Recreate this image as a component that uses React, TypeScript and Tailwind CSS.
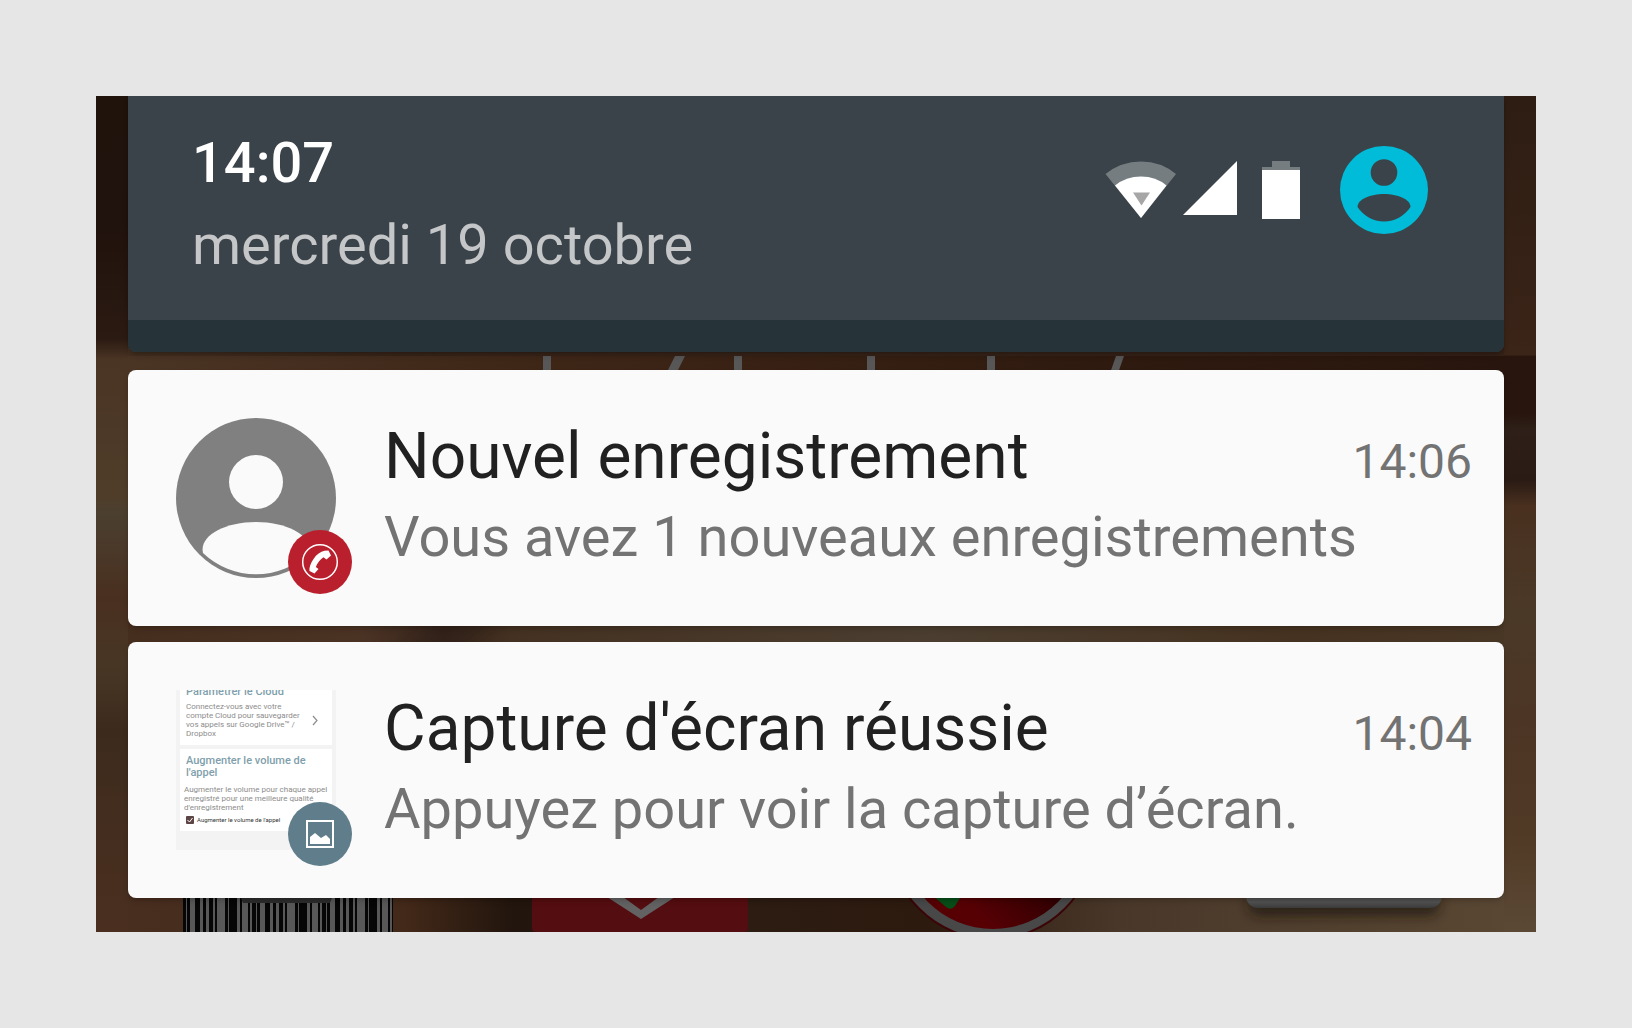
import type { ReactNode } from "react";

function Wallpaper() {
  return (
    <svg
      className="absolute inset-0 size-full"
      viewBox="96 96 1440 836"
      preserveAspectRatio="xMidYMid slice"
      aria-hidden="true"
    >
      <defs>
        <linearGradient id="left" x1="0" y1="0" x2="0" y2="1">
          <stop offset="0" stopColor="#20130c" />
          <stop offset="0.15" stopColor="#20120c" />
          <stop offset="0.29" stopColor="#2a1a12" />
          <stop offset="0.315" stopColor="#4a3424" />
          <stop offset="0.48" stopColor="#4f3d29" />
          <stop offset="0.5" stopColor="#4b3f30" />
          <stop offset="0.6" stopColor="#492f1f" />
          <stop offset="0.68" stopColor="#483625" />
          <stop offset="0.76" stopColor="#3c2b1d" />
          <stop offset="0.86" stopColor="#432d1e" />
          <stop offset="1" stopColor="#4a2f20" />
        </linearGradient>
        <linearGradient id="right" x1="0" y1="0" x2="0" y2="1">
          <stop offset="0" stopColor="#2d1d13" />
          <stop offset="0.31" stopColor="#3b2418" />
          <stop offset="0.311" stopColor="#28160e" />
          <stop offset="0.38" stopColor="#27150e" />
          <stop offset="0.4" stopColor="#2e2018" />
          <stop offset="0.46" stopColor="#2a1b14" />
          <stop offset="0.49" stopColor="#49301f" />
          <stop offset="0.62" stopColor="#4b3927" />
          <stop offset="0.74" stopColor="#4c3524" />
          <stop offset="0.88" stopColor="#503925" />
          <stop offset="1" stopColor="#5b4935" />
        </linearGradient>
        <linearGradient id="gapHeader">
          <stop offset="0" stopColor="#432f20" />
          <stop offset="0.2" stopColor="#38251a" />
          <stop offset="1" stopColor="#352117" />
        </linearGradient>
        <linearGradient id="gapTop">
          <stop offset="0" stopColor="#4a3424" />
          <stop offset="0.3" stopColor="#3e2617" />
          <stop offset="0.7" stopColor="#2f1a0f" />
          <stop offset="1" stopColor="#28160e" />
        </linearGradient>
        <linearGradient id="gapMiddle">
          <stop offset="0" stopColor="#462e1e" />
          <stop offset="0.17" stopColor="#4b3324" />
          <stop offset="0.23" stopColor="#35241b" />
          <stop offset="0.28" stopColor="#443121" />
          <stop offset="0.58" stopColor="#4b3e30" />
          <stop offset="0.85" stopColor="#463220" />
          <stop offset="1" stopColor="#493726" />
        </linearGradient>
        <linearGradient id="bottom">
          <stop offset="0" stopColor="#482e1f" />
          <stop offset="0.2" stopColor="#432919" />
          <stop offset="0.28" stopColor="#22150d" />
          <stop offset="0.45" stopColor="#2c1c12" />
          <stop offset="0.58" stopColor="#2d1a0f" />
          <stop offset="0.72" stopColor="#49382a" />
          <stop offset="1" stopColor="#594733" />
        </linearGradient>
        <linearGradient id="tile" x1="0" y1="0" x2="0" y2="1">
          <stop offset="0" stopColor="#454545" />
          <stop offset="0.85" stopColor="#515151" />
          <stop offset="1" stopColor="#3a3a3a" />
        </linearGradient>
        <linearGradient id="disc" x1="0" y1="1" x2="1" y2="0">
          <stop offset="0.25" stopColor="#560004" />
          <stop offset="0.6" stopColor="#220002" />
        </linearGradient>
        <pattern id="barcode" x="184" y="0" width="70" height="40" patternUnits="userSpaceOnUse">
          <rect width="70" height="40" fill="#060606" />
          <path
            fill="#585858"
            d="M2 0h1v40h-1zM6 0h5v40h-5zM16 0h3v40h-3zM22 0h3v40h-3zM29 0h2v40h-2zM33 0h8v40h-8zM44 0h1v40h-1zM53 0h3v40h-3zM58 0h6v40h-6zM66 0h2v40h-2z"
          />
        </pattern>
        <filter id="soft" x="-20%" y="-50%" width="140%" height="200%">
          <feGaussianBlur stdDeviation="6" />
        </filter>
      </defs>

      <rect x="96" y="96" width="720" height="836" fill="url(#left)" />
      <rect x="816" y="96" width="720" height="836" fill="url(#right)" />
      <rect x="128" y="348" width="1376" height="8" fill="url(#gapHeader)" />
      <rect x="128" y="356" width="1376" height="20" fill="url(#gapTop)" />
      <rect x="128" y="620" width="1376" height="30" fill="url(#gapMiddle)" />
      <path d="M440 620h60l-40 30h-60z" fill="#2b1b16" opacity="0.3" filter="url(#soft)" />
      <rect x="128" y="892" width="1376" height="40" fill="url(#bottom)" />

      {/* tops of the clock widget's letters */}
      <path
        fill="#575757"
        d="M543 356h8v20h-8zM675 356h10l-10 20h-10zM734 356h8v20h-8zM867 356h8v20h-8zM987 356h8v20h-8zM1116 356h8l-7 20h-8z"
      />

      {/* launcher icons */}
      <rect x="183" y="890" width="210" height="42" fill="url(#barcode)" />
      <path d="M238 890h97l-5 13h-87z" fill="#2c2c2c" />
      <rect x="532" y="880" width="216" height="52" rx="4" fill="#540d10" />
      <path d="M590 886l51 33 51-33h-18l-33 24-33-24z" fill="#626262" />
      <circle cx="992" cy="836" r="104" fill="#3c0508" />
      <circle cx="992" cy="836" r="102" fill="#484848" />
      <circle cx="993" cy="837" r="92" fill="url(#disc)" />
      <path d="M926 890h39l-10 16q-4 5-9 1z" fill="#064d18" />
      <rect x="1248" y="890" width="192" height="26" rx="12" fill="#1c140d" opacity="0.7" filter="url(#soft)" />
      <rect x="1246" y="870" width="196" height="38" rx="12" fill="url(#tile)" />
    </svg>
  );
}

function WifiIcon() {
  return (
    <svg width="72" height="58" viewBox="0 0 72 58" aria-hidden="true">
      <path d="M0.500 13Q16 0.500 36 0.500T71 13L36 57z" fill="#757d81" />
      <path d="M10 24.500Q21 15.500 36 15.500T61.500 24.500L36 57z" fill="#fff" />
      <path d="M28 31.500h17l-8.500 13z" fill="#a6a6a6" />
    </svg>
  );
}

function SignalIcon() {
  return (
    <svg width="54" height="54" viewBox="0 0 54 54" aria-hidden="true">
      <path d="M0 54L54 0v54z" fill="#fff" />
    </svg>
  );
}

function BatteryIcon() {
  return (
    <svg width="38" height="58" viewBox="0 0 38 58" aria-hidden="true">
      <path d="M10 0h18v6h10v4H0V6h10z" fill="#757d81" />
      <path d="M0 9h38v49H0z" fill="#fff" />
    </svg>
  );
}

function AccountIcon() {
  return (
    <svg width="88" height="88" viewBox="0 0 88 88" aria-hidden="true">
      <circle cx="44" cy="44" r="44" fill="#00bcd8" />
      <circle cx="44" cy="26.500" r="13.300" fill="#3a4349" />
      <path d="M17.500 61C17.500 53 31 48 44 48s26.500 5 26.500 13C65 69.500 55 75.500 44 75.500S23 69.500 17.500 61z" fill="#3a4349" />
    </svg>
  );
}

function ContactPicture() {
  return (
    <svg className="size-40" viewBox="0 0 160 160" aria-hidden="true">
      <circle cx="80" cy="80" r="80" fill="#808080" />
      <circle cx="80" cy="64" r="27" fill="#fafafa" />
      <path d="M27 135C23 118 48 104 80 104s57 14 53 31A76.500 76.500 0 0 1 27 135z" fill="#fafafa" />
    </svg>
  );
}

function CallBadge() {
  return (
    <svg className="absolute -right-4 -bottom-4 size-16" viewBox="0 0 64 64" aria-hidden="true">
      <circle cx="32" cy="32" r="32" fill="#b91f2c" />
      <circle cx="32" cy="32" r="17.300" fill="none" stroke="#fff" strokeWidth="1.500" />
      <path
        d="M36.500 20.800l4-.3 2.500 5-4.500 4-3-2.200c-3 1.700-6.200 5.500-7.700 9.700l2.700 2-4 4.500-5-2.500c-.5-3.500 1-7.500 4-12S32.500 21.500 36.500 20.800z"
        fill="#fff"
      />
    </svg>
  );
}

function ImageBadge() {
  return (
    <svg className="absolute -right-4 -bottom-4 size-16" viewBox="0 0 64 64" aria-hidden="true">
      <circle cx="32" cy="32" r="32" fill="#607d8b" />
      <rect x="19" y="19" width="26" height="26" fill="none" stroke="#fff" strokeWidth="2" />
      <path d="M22 42v-7l5-4 6 5 5-3 4 4v5z" fill="#fff" />
    </svg>
  );
}

function ScreenshotThumbnail() {
  return (
    <div className="size-40 overflow-hidden bg-[#f3f3f3] px-1 text-[8px] leading-[9px] text-[#8c8c8c]">
      <section className="flex h-[55px] items-start justify-between bg-white px-1.5">
        <div className="-mt-1 whitespace-nowrap">
          <h3 className="text-[11px] leading-3 font-medium text-[#7f9fac]">Paramétrer le Cloud</h3>
          <p className="mt-1">
            Connectez-vous avec votre
            <br />
            compte Cloud pour sauvegarder
            <br />
            vos appels sur Google Drive™ /
            <br />
            Dropbox
          </p>
        </div>
        <svg className="mt-[25px] mr-2 shrink-0" width="6" height="11" viewBox="0 0 6 11" aria-hidden="true">
          <path d="M1 1l4 4.500-4 4.500" fill="none" stroke="#8c8c8c" strokeWidth="1.200" />
        </svg>
      </section>
      <section className="mt-1 h-[82px] bg-white px-1 pt-1.5 whitespace-nowrap">
        <h3 className="px-0.5 text-[11px] leading-3 font-medium text-[#7f9fac]">
          Augmenter le volume de
          <br />
          l'appel
        </h3>
        <p className="mt-1.5">
          Augmenter le volume pour chaque appel
          <br />
          enregistré pour une meilleure qualité
          <br />
          d'enregistrement
        </p>
        <label className="mt-1 flex items-center gap-[3px] px-0.5 text-[6px] leading-2 text-[#333]">
          <span className="grid">
            <input
              type="checkbox"
              defaultChecked
              className="col-start-1 row-start-1 size-2 appearance-none rounded-[1px] bg-[#5d4545]"
            />
            <svg className="pointer-events-none col-start-1 row-start-1 size-2" viewBox="0 0 8 8" aria-hidden="true">
              <path d="M1.500 4l2 2 3-4" fill="none" stroke="#fff" />
            </svg>
          </span>
          Augmenter le volume de l'appel
        </label>
      </section>
    </div>
  );
}

type NotificationProps = {
  title: string;
  text: string;
  time: string;
  picture: ReactNode;
  badge: ReactNode;
};

function Notification({ title, text, time, picture, badge }: NotificationProps) {
  return (
    <article className="flex h-64 gap-12 rounded-lg bg-[#fafafa] py-12 pr-8 pl-12 shadow-md shadow-black/15">
      <div className="relative size-40 shrink-0">
        {picture}
        {badge}
      </div>
      <div className="min-w-0 flex-1 whitespace-nowrap text-[#737373]">
        <div className="flex items-baseline justify-between">
          <h2 className="text-[64px] leading-[78px] text-[#212121]">{title}</h2>
          <time className="text-5xl">{time}</time>
        </div>
        <p className="mt-0.5 text-[56px] leading-[78px]">{text}</p>
      </div>
    </article>
  );
}

export default function App() {
  return (
    <div className="min-h-screen bg-[#e6e6e6] p-24 font-['Roboto',sans-serif]">
      <main className="relative overflow-hidden px-8 pb-[34px]">
        <Wallpaper />
        <div className="relative">
          <header className="overflow-hidden rounded-b-lg bg-[#3a4349] shadow-md shadow-black/20">
            <div className="flex h-56 items-start justify-between pt-7 pr-[76px] pl-16">
              <div>
                <h1 className="text-[56px] leading-[78px] font-medium text-white">14:07</h1>
                <p className="mt-1 text-[56px] leading-[78px] text-[#c4c6c8]">mercredi 19 octobre</p>
              </div>
              <div className="flex items-start pt-[22px]">
                <div className="flex items-start pt-[15px]">
                  <WifiIcon />
                  <div className="pr-[25px] pl-1.5">
                    <SignalIcon />
                  </div>
                  <BatteryIcon />
                </div>
                <button type="button" aria-label="Profil" className="ml-10">
                  <AccountIcon />
                </button>
              </div>
            </div>
            <div className="h-8 bg-[#263338]" />
          </header>

          <div className="mt-[18px] space-y-4">
            <Notification
              title="Nouvel enregistrement"
              text="Vous avez 1 nouveaux enregistrements"
              time="14:06"
              picture={<ContactPicture />}
              badge={<CallBadge />}
            />
            <Notification
              title="Capture d'écran réussie"
              text="Appuyez pour voir la capture d’écran."
              time="14:04"
              picture={<ScreenshotThumbnail />}
              badge={<ImageBadge />}
            />
          </div>
        </div>
      </main>
    </div>
  );
}
